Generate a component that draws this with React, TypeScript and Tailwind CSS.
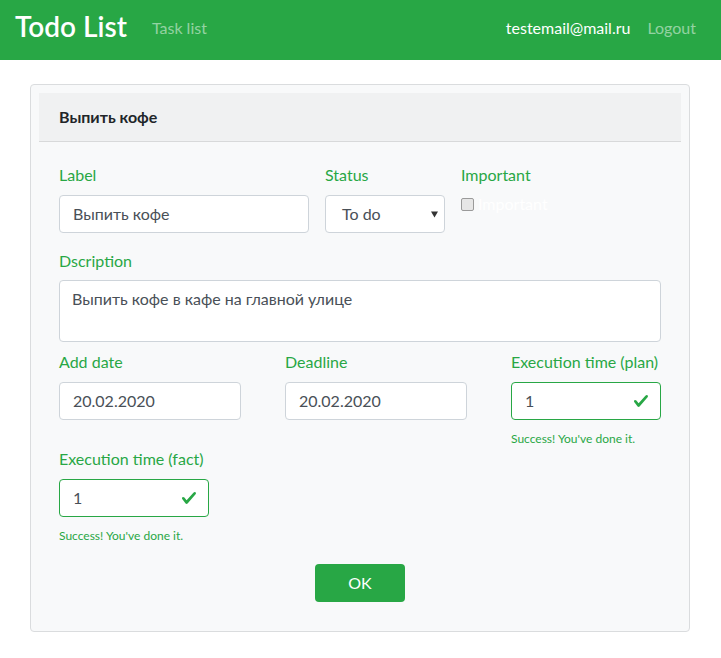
import React from 'react'

function CheckIcon() {
  return (
    <svg viewBox="0 0 8 8" className="h-[16px] w-[16px]" aria-hidden>
      <path
        fill="#28a745"
        d="M2.3 6.73L.6 4.53c-.4-1.04.46-1.4 1.1-.8l1.1 1.4 3.4-3.8c.6-.63 1.6-.27 1.2.7l-4 4.6c-.43.5-.8.4-1.1.1z"
      />
    </svg>
  )
}

function Label({ children }: { children: React.ReactNode }) {
  return <div className="h-[24px] text-[16px] leading-[24px] text-[#28a745]">{children}</div>
}

function TextInput({ value, width }: { value: string; width: string }) {
  return (
    <div
      className={`mt-[8px] flex h-[38px] items-center rounded-[4px] border border-[#ced4da] bg-white pl-[13px] text-[16px] text-[#495057] ${width}`}
    >
      {value}
    </div>
  )
}

function ValidInput({ value }: { value: string }) {
  return (
    <>
      <div className="mt-[8px] flex h-[38px] w-[150px] items-center justify-between rounded-[4px] border border-[#28a745] bg-white pl-[13px] pr-[11px] text-[16px] text-[#495057]">
        <span>{value}</span>
        <CheckIcon />
      </div>
      <div className="mt-[10px] h-[18px] text-[12px] leading-[18px] text-[#28a745]">Success! You've done it.</div>
    </>
  )
}

export default function App() {
  return (
    <div className="min-h-[658px] bg-white font-[Lato,'Noto_Sans',sans-serif]">
      {/* Navbar */}
      <nav className="flex h-[60px] items-center bg-[#28a745] px-[15px] pb-[6px]">
        <span className="mb-[2px] text-[28px] font-semibold leading-none text-white">Todo List</span>
        <span className="ml-[25px] mt-[2px] text-[16px] text-white/50">Task list</span>
        <div className="ml-auto mt-[2px] flex items-center gap-[17px] pr-[10px] text-[16px]">
          <span className="text-white">testemail@mail.ru</span>
          <span className="text-white/50">Logout</span>
        </div>
      </nav>

      {/* Card */}
      <div className="ml-[30px] mt-[24px] w-[660px] rounded-[4px] border border-[#dadcde] bg-[#f8f9fa] p-[8px]">
        <div className="flex h-[49px] items-center border-b border-[#d8d9da] bg-[#f0f1f2] px-[20px] text-[16px] font-bold text-[#212529]">
          Выпить кофе
        </div>

        <div className="px-[20px] pb-[21px] pt-[21px]">
          {/* Row 1 */}
          <div className="flex gap-[16px]">
            <div>
              <Label>Label</Label>
              <TextInput value="Выпить кофе" width="w-[250px]" />
            </div>
            <div>
              <Label>Status</Label>
              <div className="mt-[8px] flex h-[38px] w-[120px] items-center justify-between rounded-[4px] border border-[#ced4da] bg-white pl-[16px] pr-[6px] text-[16px] text-[#495057]">
                <span>To do</span>
                <svg viewBox="0 0 8 7" className="h-[7px] w-[7px]" aria-hidden>
                  <path d="M0 0h8L4 7z" fill="#333" />
                </svg>
              </div>
            </div>
            <div>
              <Label>Important</Label>
              <div className="mt-[5px] flex items-center gap-[4px]">
                <span className="h-[13px] w-[13px] rounded-[2px] border border-[#9a9a9a] bg-[#e6e6e6]" />
                <span className="text-[16px] text-white">Important</span>
              </div>
            </div>
          </div>

          {/* Description */}
          <div className="mt-[16px]">
            <Label>Dscription</Label>
            <div className="mt-[7px] h-[62px] w-[602px] rounded-[4px] border border-[#ced4da] bg-white px-[12px] py-[6px] text-[16px] leading-[24px] text-[#495057]">
              Выпить кофе в кафе на главной улице
            </div>
          </div>

          {/* Dates */}
          <div className="mt-[8px] flex gap-[44px]">
            <div>
              <Label>Add date</Label>
              <TextInput value="20.02.2020" width="w-[182px]" />
            </div>
            <div>
              <Label>Deadline</Label>
              <TextInput value="20.02.2020" width="w-[182px]" />
            </div>
            <div>
              <Label>Execution time (plan)</Label>
              <ValidInput value="1" />
            </div>
          </div>

          {/* Fact */}
          <div className="mt-[-1px]">
            <Label>Execution time (fact)</Label>
            <ValidInput value="1" />
          </div>

          <div className="mt-[19px] flex justify-center">
            <button className="h-[38px] w-[90px] rounded-[4px] bg-[#28a745] text-[16px] text-white">OK</button>
          </div>
        </div>
      </div>
    </div>
  )
}
